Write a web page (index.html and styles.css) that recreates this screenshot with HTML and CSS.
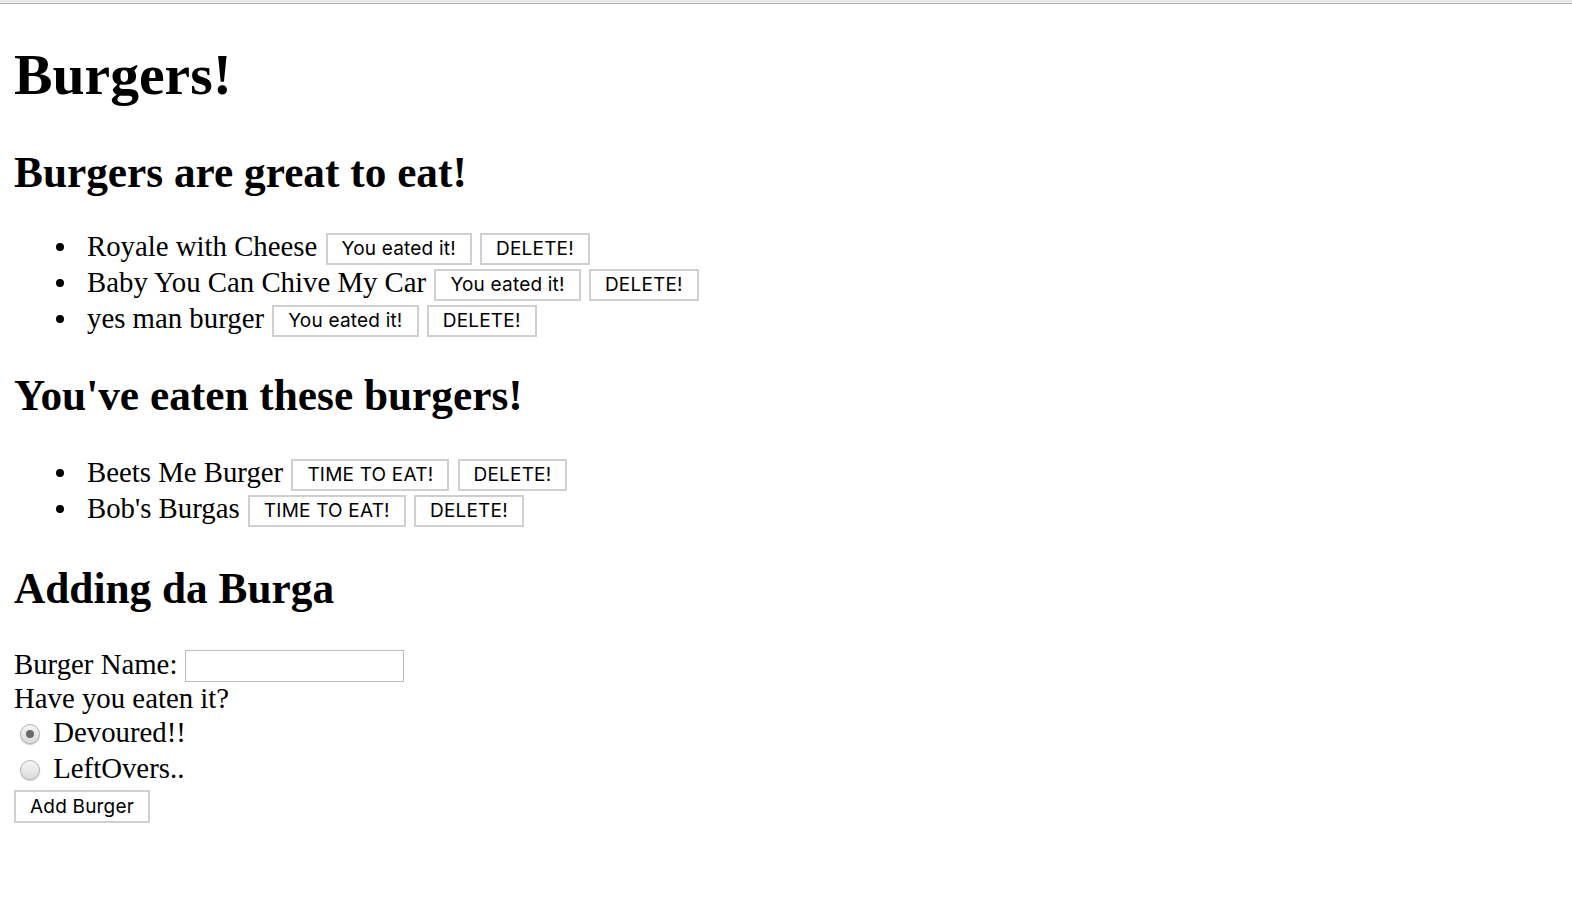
FILE: index.html
```html
<!DOCTYPE html>
<html>
<head>
<meta charset="utf-8">
<title>Burgers</title>
<link rel="stylesheet" href="styles.css">
</head>
<body>
<div class="chrome"></div>
<main class="page">
  <h1 class="title">Burgers!</h1>
  <h2 class="heading heading--tight">Burgers are great to eat!</h2>
  <ul class="list">
    <li>Royale with Cheese <button class="btn">You eated it!</button> <button class="btn">DELETE!</button></li>
    <li>Baby You Can Chive My Car <button class="btn">You eated it!</button> <button class="btn">DELETE!</button></li>
    <li>yes man burger <button class="btn">You eated it!</button> <button class="btn">DELETE!</button></li>
  </ul>
  <h2 class="heading">You've eaten these burgers!</h2>
  <ul class="list list--last">
    <li>Beets Me Burger <button class="btn">TIME TO EAT!</button> <button class="btn">DELETE!</button></li>
    <li>Bob's Burgas <button class="btn">TIME TO EAT!</button> <button class="btn">DELETE!</button></li>
  </ul>
  <h2 class="heading">Adding da Burga</h2>
  <form class="form">
    <div class="row"><label for="bn">Burger Name:</label> <input id="bn" class="text-input" type="text"></div>
    <div class="row">Have you eaten it?</div>
    <div class="row radio-row"><input class="radio" type="radio" name="d" id="d1" checked> <label for="d1">Devoured!!</label></div>
    <div class="row radio-row"><input class="radio" type="radio" name="d" id="d2"> <label for="d2">LeftOvers..</label></div>
    <div class="row"><button class="btn btn--add" type="button">Add Burger</button></div>
  </form>
</main>
</body>
</html>
```

FILE: styles.css
```css
html, body {
  margin: 0;
  padding: 0;
  background: #fff;
}
body {
  font-family: "Liberation Serif", "Times New Roman", serif;
  font-size: 28.8px;
  color: #000;
}
.chrome {
  height: 3px;
  background: #e9e9e9;
  border-bottom: 1px solid #b4b4b4;
}
.page {
  padding: 0 14px 14px 14px;
}
.title {
  font-size: 57.7px;
  font-weight: bold;
  margin: 39px 0 41px 0;
  line-height: 64px;
}
.heading {
  font-size: 43.3px;
  font-weight: bold;
  margin: 35px 0;
  line-height: 48px;
}
.heading--tight {
  margin-bottom: 32px;
}
.list {
  margin: 28px 0;
  padding-left: 73px;
  line-height: 36px;
  list-style: none;
}
.list--last {
  margin-bottom: 38px;
}
.list li {
  height: 36px;
}
.list li::before {
  content: "";
  display: inline-block;
  width: 8px;
  height: 8px;
  border-radius: 50%;
  background: #000;
  margin: 0 23px 0 -31px;
  vertical-align: 5px;
}
.btn {
  font-family: Inter, "Liberation Sans", Arial, sans-serif;
  font-size: 19px;
  letter-spacing: 0.2px;
  color: #000;
  background: #fff;
  border: 2px solid #cfcfcf;
  border-radius: 0;
  padding: 0 14px;
  height: 32px;
  margin: 0 0 0 1px;
  vertical-align: 1px;
}
.btn--add {
  height: 33px;
  padding: 0 14px;
  margin-left: 0;
}
.form {
  line-height: 34px;
}
.row {
  height: 34px;
}
.radio-row {
  height: 36px;
}
.text-input {
  width: 219px;
  height: 32px;
  box-sizing: border-box;
  border: 1px solid #bdbdbd;
  margin: 0;
  padding: 0;
  vertical-align: 4px;
}
.radio {
  appearance: none;
  -webkit-appearance: none;
  width: 20px;
  height: 20px;
  border-radius: 50%;
  border: 1px solid #b5b5b5;
  background: linear-gradient(#f4f4f4, #dcdcdc);
  box-shadow: 0 1px 1px rgba(0,0,0,0.25);
  margin: 0 6px 0 6px;
  vertical-align: -2px;
  position: relative;
}
.radio:checked::after {
  content: "";
  position: absolute;
  left: 5px;
  top: 5px;
  width: 8px;
  height: 8px;
  border-radius: 50%;
  background: #6a6a6a;
}
```
